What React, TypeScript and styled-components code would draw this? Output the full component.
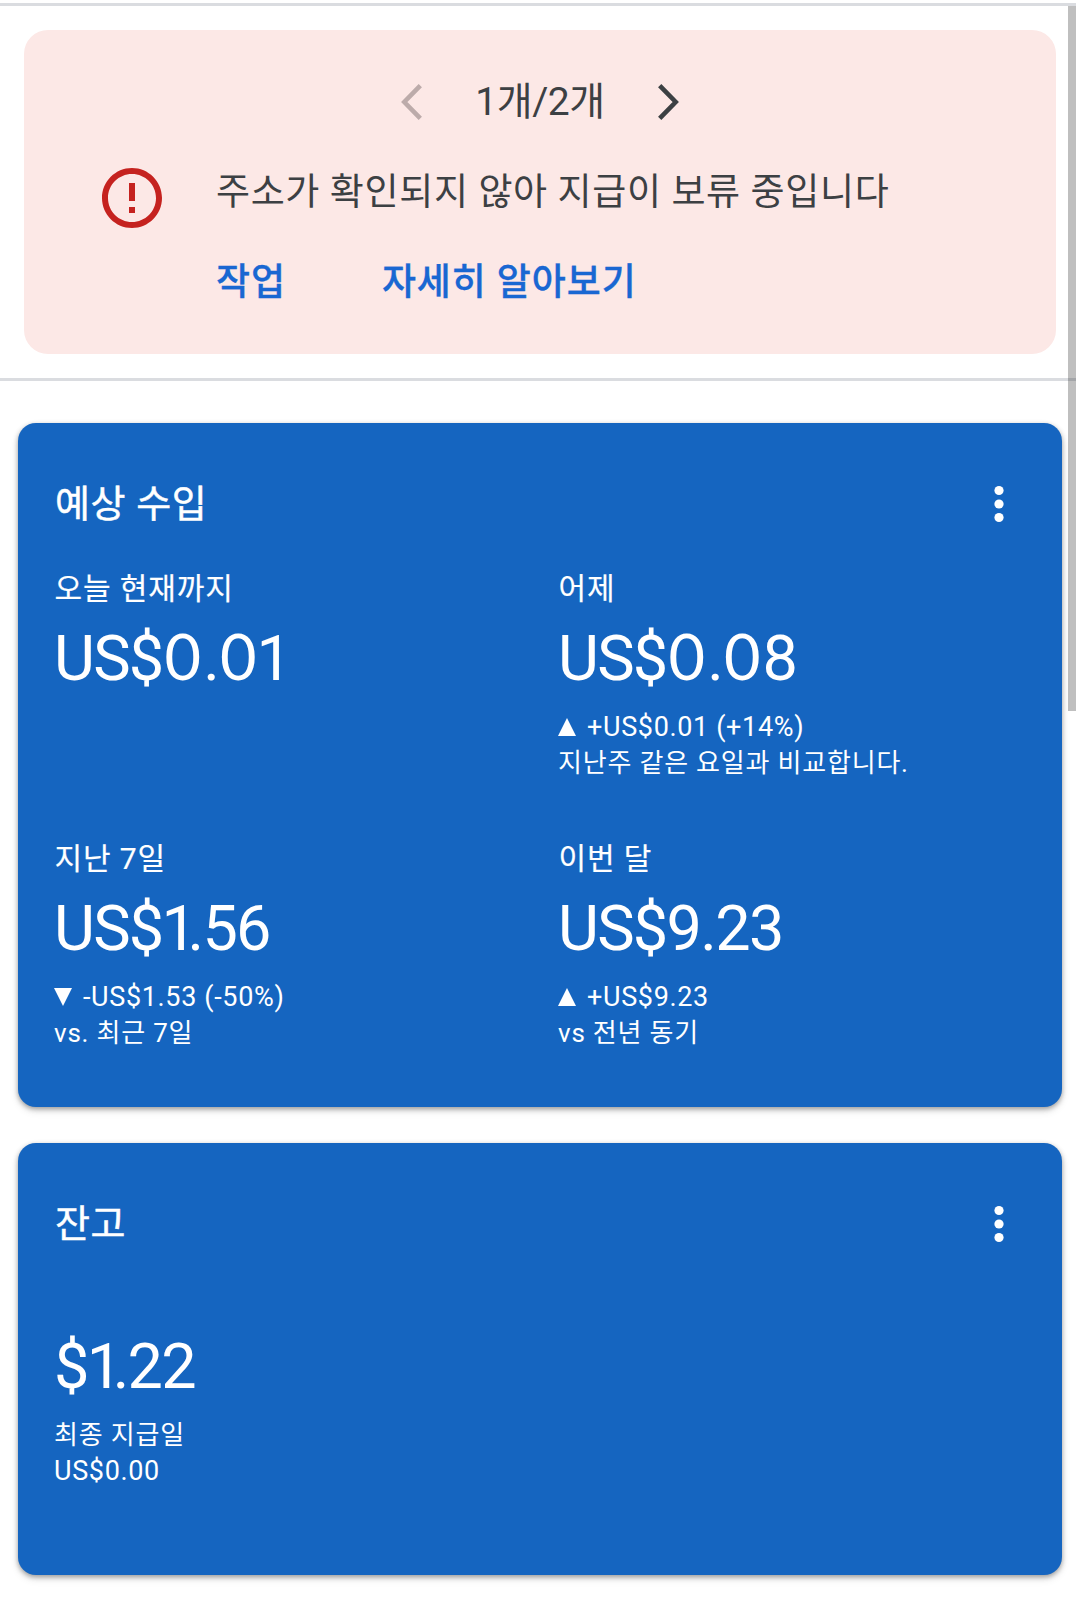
import React from "react";
import styled, { createGlobalStyle } from "styled-components";

const Global = createGlobalStyle`
  * { box-sizing: border-box; }
  body { margin: 0; background: #fff; font-family: Roboto, "Noto Sans CJK KR", sans-serif; }
  h2, p { margin: 0; }
`;

const Page = styled.div`
  position: relative;
  width: 1076px;
  height: 1600px;
  padding-top: 3px;
  overflow: hidden;
  background: #fff;
`;

const ScrollThumb = styled.div`
  position: absolute;
  top: 6px;
  right: 0;
  width: 8px;
  height: 705px;
  background: rgba(0, 0, 0, 0.25);
`;

const AlertSection = styled.section`
  height: 378px;
  padding: 24px 20px 21px 24px;
  border-top: 3px solid #dadce0;
  border-bottom: 3px solid #dadce0;
`;

const Alert = styled.div`
  width: 1032px;
  height: 324px;
  padding-top: 36px;
  border-radius: 24px;
  background: #fce8e6;
  color: #3c4043;
`;

const Pager = styled.div`
  display: flex;
  align-items: center;
  justify-content: center;
  gap: 53px;
  height: 72px;
  font-size: 39px;
  letter-spacing: -0.4px;
  line-height: 60px;
`;

const PagerButton = styled.button<{ $dim?: boolean }>`
  display: flex;
  padding: 0;
  border: 0;
  background: none;
  color: ${(p) => (p.$dim ? "#bcabaa" : "#3c4043")};
`;

const AlertBody = styled.div`
  display: flex;
  gap: 48px;
  padding: 12px 0 0 72px;
`;

const AlertIcon = styled.svg`
  width: 72px;
  height: 72px;
  margin-top: 12px;
  fill: #c5221f;
`;

const AlertText = styled.div`
  display: flex;
  flex-direction: column;
`;

const Message = styled.p`
  padding-top: 13px;
  font-size: 37px;
  letter-spacing: 0.64px;
  line-height: 60px;
  white-space: nowrap;
`;

const Links = styled.div`
  display: flex;
  gap: 96px;
  padding-top: 30px;
`;

const Link = styled.a`
  color: #1967d2;
  font-size: 37px;
  font-weight: 500;
  letter-spacing: 0.9px;
  line-height: 60px;
  -webkit-text-stroke: 0.3px currentColor;
`;

const Cards = styled.main`
  display: flex;
  flex-direction: column;
  gap: 36px;
  padding: 42px 14px 0 18px;
`;

const Card = styled.section<{ $height: number }>`
  height: ${(p) => p.$height}px;
  padding: 45px 36px 0;
  border-radius: 18px;
  background: #1565c0;
  color: #fff;
  box-shadow: 0 2px 5px rgba(0, 0, 0, 0.34), 0 4px 9px rgba(0, 0, 0, 0.1);
`;

const CardHeader = styled.header`
  display: flex;
  align-items: center;
  justify-content: space-between;
  height: 72px;
`;

const CardTitle = styled.h2`
  padding-left: 1px;
  font-size: 38px;
  font-weight: 400;
  letter-spacing: 0.6px;
  line-height: 48px;
  -webkit-text-stroke: 0.5px currentColor;
`;

const MenuButton = styled.button`
  display: flex;
  padding: 0;
  border: 0;
  background: none;
  color: #fff;
`;

const Metrics = styled.div`
  display: grid;
  grid-template-columns: 504px 1fr;
  grid-auto-rows: 270px;
  padding-top: 31px;
`;

const Metric = styled.div`
  display: flex;
  flex-direction: column;
`;

const Label = styled.p`
  padding-left: 0.5px;
  font-size: 30px;
  letter-spacing: 0.9px;
  line-height: 36px;
  -webkit-text-stroke: 0.2px currentColor;
`;

const AmountLine = styled.p`
  height: 87px;
  padding-top: 16px;
  font-size: 63px;
  letter-spacing: -1.7px;
  line-height: 72px;
`;

const Zero = styled.span`
  margin-left: 2px;
  font-family: Lato, sans-serif;
  letter-spacing: 2px;
  line-height: 0;
`;

const One = styled.span<{ $tight: boolean }>`
  margin-left: ${(p) => (p.$tight ? -1 : -2)}px;
  letter-spacing: ${(p) => (p.$tight ? "-9.5px" : "0")};
`;

const Details = styled.div`
  padding-top: 15px;
  font-size: 27px;
  letter-spacing: 0.65px;
  line-height: 36px;
`;

const Change = styled.p`
  display: flex;
  align-items: center;
  gap: 11px;
`;

const Note = styled.p`
  font-size: 26px;
  letter-spacing: 0.8px;
`;

const Balance = styled.div`
  padding-top: 55px;
`;

const Triangle = ({ down }: { down?: boolean }) => (
  <svg width="18" height="18" viewBox="0 0 18 18" fill="#fff">
    <path d={down ? "M0 0h18L9 18z" : "M0 18h18L9 0z"} />
  </svg>
);

const Chevron = ({ next }: { next?: boolean }) => (
  <svg width="21" height="36" viewBox="0 0 21 36" fill="none" stroke="currentColor" strokeWidth="4.6">
    <path d={next ? "M1.7 1.7L17.7 18L1.7 34.3" : "M19.3 1.7L3.3 18L19.3 34.3"} />
  </svg>
);

const MoreIcon = () => (
  <svg width="54" height="54" viewBox="0 0 24 24" fill="currentColor">
    <circle cx="12" cy="6" r="2.05" />
    <circle cx="12" cy="12" r="2.05" />
    <circle cx="12" cy="18" r="2.05" />
  </svg>
);

// Rounds the zeros and kerns the ones so that the figures sit evenly.
const Amount = ({ value }: { value: string }) => {
  const parts = value.split(/([01])/).filter(Boolean);
  return (
    <AmountLine>
      {parts.map((part, i) => {
        if (part === "0") return <Zero key={i}>0</Zero>;
        if (part === "1") return <One key={i} $tight={(parts[i + 1] ?? "").startsWith(".")}>1</One>;
        return <React.Fragment key={i}>{part}</React.Fragment>;
      })}
    </AmountLine>
  );
};

interface MetricData {
  label: string;
  amount: string;
  change?: string;
  down?: boolean;
  note?: string;
}

const metrics: MetricData[] = [
  { label: "오늘 현재까지", amount: "US$0.01" },
  { label: "어제", amount: "US$0.08", change: "+US$0.01 (+14%)", note: "지난주 같은 요일과 비교합니다." },
  { label: "지난 7일", amount: "US$1.56", change: "-US$1.53 (-50%)", down: true, note: "vs. 최근 7일" },
  { label: "이번 달", amount: "US$9.23", change: "+US$9.23", note: "vs 전년 동기" },
];

const Header = ({ title }: { title: string }) => (
  <CardHeader>
    <CardTitle>{title}</CardTitle>
    <MenuButton><MoreIcon /></MenuButton>
  </CardHeader>
);

export default function App() {
  return (
    <Page>
      <Global />
      <AlertSection>
        <Alert>
          <Pager>
            <PagerButton $dim><Chevron /></PagerButton>
            <span>1개/2개</span>
            <PagerButton><Chevron next /></PagerButton>
          </Pager>
          <AlertBody>
            <AlertIcon viewBox="0 0 24 24">
              <path d="M11 15h2v2h-2zm0-8h2v6h-2zm.99-5C6.47 2 2 6.48 2 12s4.47 10 9.99 10C17.52 22 22 17.52 22 12S17.52 2 11.99 2zM12 20c-4.42 0-8-3.58-8-8s3.58-8 8-8 8 3.58 8 8-3.58 8-8 8z" />
            </AlertIcon>
            <AlertText>
              <Message>주소가 확인되지 않아 지급이 보류 중입니다</Message>
              <Links>
                <Link>작업</Link>
                <Link>자세히 알아보기</Link>
              </Links>
            </AlertText>
          </AlertBody>
        </Alert>
      </AlertSection>
      <Cards>
        <Card $height={684}>
          <Header title="예상 수입" />
          <Metrics>
            {metrics.map((m) => (
              <Metric key={m.label}>
                <Label>{m.label}</Label>
                <Amount value={m.amount} />
                {m.change && (
                  <Details>
                    <Change><Triangle down={m.down} />{m.change}</Change>
                    <Note>{m.note}</Note>
                  </Details>
                )}
              </Metric>
            ))}
          </Metrics>
        </Card>
        <Card $height={432}>
          <Header title="잔고" />
          <Balance>
            <Amount value="$1.22" />
            <Details>
              <Note>최종 지급일</Note>
              <p>US$0.00</p>
            </Details>
          </Balance>
        </Card>
      </Cards>
      <ScrollThumb />
    </Page>
  );
}
